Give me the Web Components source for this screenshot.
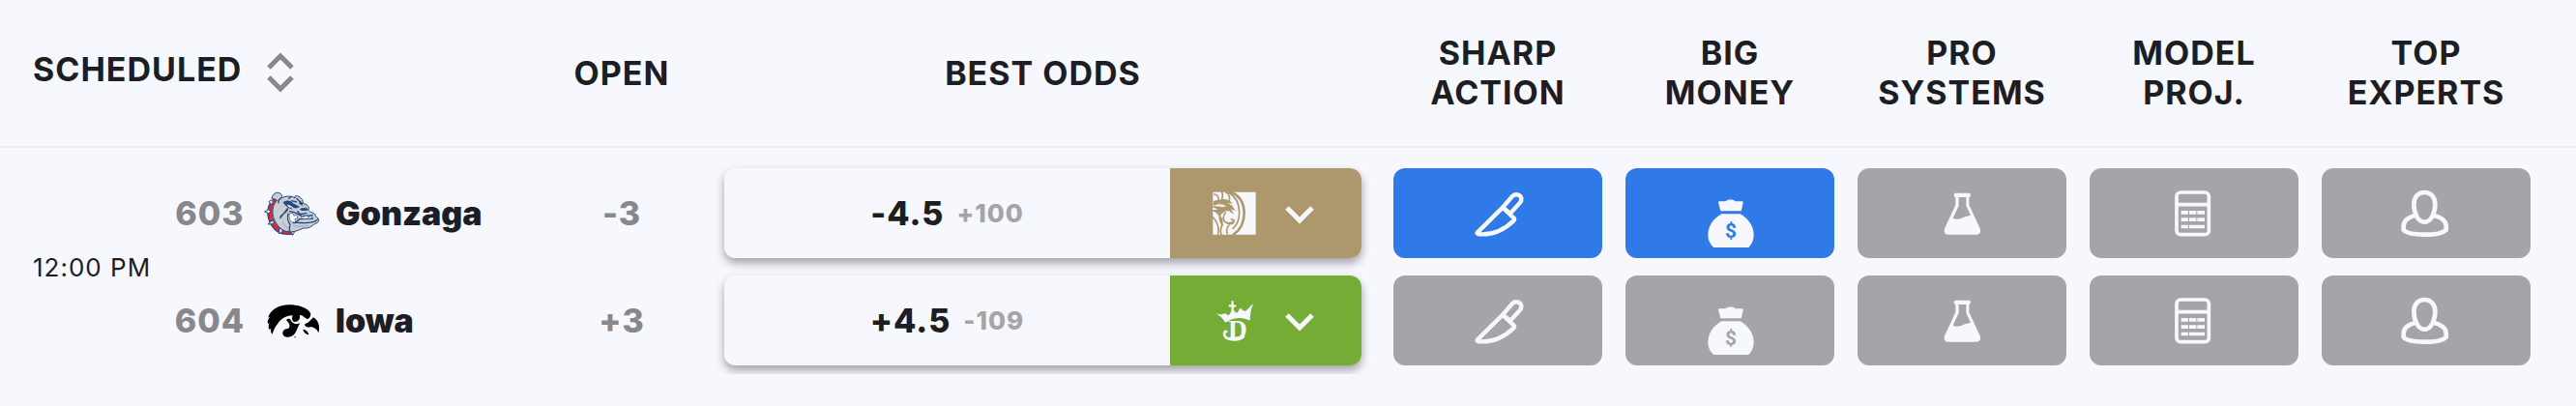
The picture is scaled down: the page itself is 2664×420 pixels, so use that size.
<!DOCTYPE html>
<html lang="en">
<head>
<meta charset="utf-8">
<meta name="viewport" content="width=device-width, initial-scale=1">
<title>Best odds</title>
<style>
    body {
        margin: 0;
        background: #f7f8fd;
        color: #1d1e23;
        font-family: Inter, "Liberation Sans", sans-serif;
        letter-spacing: 1px;
    }
</style>
</head>
<body>
<odds-board></odds-board>

<script>
    // white icons for the signal buttons, all on the same 240 unit box
    const signals = {
        sharp: `
            <g fill="none" stroke="currentColor" stroke-width="13" stroke-linejoin="round">
                <path d="M192 68C199 61 211 61 217 68C222 75 221 82 216 88L186 121L162 103Z"/>
                <path d="M162 103L84 180C81 184 84 186 89 186C132 189 170 169 196 144C199 141 199 138 196 135Z"/>
            </g>`,
        money: `
            <path fill="currentColor" d="M111 87C111 85 113 84 116 84H134C139 77 159 77 164 84H184C187 84 189 86 188 89L182 114H118Z"/>
            <path fill="currentColor" d="M121 123H179C205 137 221 162 221 189C221 204 215 217 205 227H97C85 218 79 204 79 189C79 162 94 137 121 123Z"/>
            <text class="cut" x="150" y="197" text-anchor="middle" font-family="Roboto, sans-serif" font-size="62" font-weight="700">$</text>`,
        systems: `
            <path fill="currentColor" fill-rule="evenodd" d="M127 58H169C175 58 176 70 169 71V95L202 166C208 179 201 187 191 187H105C95 187 88 179 94 166L127 95V71C120 70 121 58 127 58ZM137 71V97L119 136C130 141 141 139 151 134C159 130 167 129 174 127L160 97V71Z"/>`,
        model: `
            <g fill="none" stroke="currentColor" stroke-width="11">
                <rect x="93" y="56" width="100" height="131" rx="12"/>
                <path d="M93 94H193"/>
            </g>
            <path fill="currentColor" d="M107 113h22v11h-22zM132 113h22v11h-22zM157 113h23v11h-23zM107 135h22v11h-22zM132 135h22v11h-22zM157 135h23v11h-23zM107 157h22v11h-22zM132 157h48v11h-48z"/>`,
        experts: `
            <g fill="none" stroke="currentColor" stroke-width="14" stroke-linejoin="round">
                <path d="M142 56C163 56 175 72 175 93C175 119 163 148 142 148C121 148 109 119 109 93C109 72 121 56 142 56Z"/>
                <path d="M114 127C91 132 77 146 77 160V172C92 192 192 192 209 172V160C209 146 194 132 170 127"/>
            </g>`
    };

    const books = {
        mgm: {
            label: 'BetMGM',
            box: '156 85 135 135',
            art: `
                <path fill="currentColor" d="M157 87H290V219H157Z"/>
                <g fill="none" stroke="var(--book)" stroke-linecap="round">
                    <path stroke-width="8" d="M208 86C239 96 253 121 254 151C254 179 243 204 221 219"/>
                    <path stroke-width="5" d="M205 88C228 101 239 125 239 151C239 173 231 190 219 200"/>
                    <path stroke-width="5" d="M161 94C170 94 176 101 174 113M185 87C188 95 188 102 184 110M197 88C207 92 210 100 208 113"/>
                    <path stroke-width="5" d="M158 166C168 177 178 193 173 218M167 148C182 160 190 179 183 197C180 205 181 214 184 219M181 150C174 170 181 180 187 190M202 216C198 206 201 196 207 190"/>
                    <path stroke-width="5" d="M196 151C186 163 188 176 197 181C207 188 219 187 222 181M204 183C212 184 219 182 223 176M214 171L222 174"/>
                </g>
                <path fill="var(--book)" d="M158 115C171 110 180 113 188 109C201 108 211 115 219 123L203 121L217 129L227 146L214 140L222 157L207 146C195 142 190 151 181 157C172 148 164 147 158 148V142L172 142C165 137 162 136 158 136V131C174 130 184 134 196 134C183 127 171 125 158 129Z"/>
                <path fill="currentColor" d="M168 126C181 123 193 126 201 132C190 130 179 127 168 126Z"/>`
        },
        dk: {
            label: 'DraftKings',
            box: '156 418 135 135',
            art: `
                <path fill="currentColor" d="M165 462C174 467 182 468 187 466C193 461 200 464 202 469C207 470 213 464 214 455L215 445L207 443L206 437L214 437L215 423L221 426L221 437L229 438V443L221 445C221 455 225 460 232 462C237 457 237 450 244 447C248 453 252 457 258 456C266 451 271 441 284 432C276 443 273 464 272 486C250 474 220 474 196 492C190 481 181 473 165 462Z"/>
                <text x="204" y="540" font-family="Liberation Serif, serif" font-size="82" font-weight="700" fill="currentColor">D</text>
                <path fill="none" stroke="currentColor" stroke-width="8" stroke-linecap="round" d="M199 520C188 518 190 540 208 543C226 547 242 545 252 535"/>`
        }
    };

    const logos = {
        gonzaga: {
            box: '30 32 180 180',
            art: `
                <path fill="none" stroke="#26477f" stroke-width="16" d="M76 79C50 90 47 130 66 157C78 177 97 183 123 179"/>
                <path fill="none" stroke="#da2b3a" stroke-width="11" d="M74 80C53 91 49 130 67 156C79 175 97 181 121 178"/>
                <g fill="#dfe6ef" stroke="#26477f" stroke-width="3">
                    <path d="M58 80L51 85L58 93L66 87ZM49 109L38 116L50 121L58 115ZM60 144L48 155L62 154L70 147ZM84 168L82 184L93 179L94 170ZM118 174L125 189L131 178L126 172Z"/>
                </g>
                <path fill="#c7ced5" stroke="#26477f" stroke-width="3" stroke-linejoin="round" d="M60 75C62 65 69 56 80 57C89 58 94 65 91 73C105 67 121 66 133 74C129 67 135 64 144 69C153 73 158 82 157 91C165 91 173 95 176 105C171 111 178 118 190 120C198 126 194 133 204 136C209 143 205 151 195 153C184 161 174 169 158 167C145 173 127 181 111 178C89 177 71 153 65 132C59 109 66 91 77 81C71 77 66 75 60 75Z"/>
                <path fill="#26477f" d="M95 87C106 78 120 81 126 90L147 100C139 107 129 106 124 100L113 94L125 109C113 108 103 99 95 87ZM145 83C154 83 158 91 155 98L145 91ZM146 108C155 103 165 103 174 107L170 112L153 113Z"/>
                <path fill="#fff" d="M107 93L116 97L121 105L112 101Z"/>
                <path fill="none" stroke="#26477f" stroke-width="4" d="M91 73C83 76 80 83 81 90M110 105C103 114 96 124 85 137M87 131C96 121 105 119 111 107M112 121C106 132 111 148 118 158M118 158C113 163 116 171 115 177M126 151C143 148 163 154 188 148C195 147 199 143 204 139M132 151L146 139L189 137M114 115C128 115 142 123 153 130L188 127M139 114L149 124L169 120M122 68L112 76M137 75L148 85M120 82L138 86"/>
                <path fill="#fff" stroke="#26477f" stroke-width="2" d="M114 123L124 119L129 129L137 125L141 136L132 139L134 149L123 149L115 139ZM152 129L160 132L166 128L174 133L184 128L184 137L154 138Z"/>
                <path fill="none" stroke="#8296b4" stroke-width="2" d="M93 148C98 158 104 164 111 166M127 160C144 165 160 160 174 158M161 97C165 99 166 103 164 106"/>`
        },
        iowa: {
            box: '30 5 180 180',
            art: `
                <path d="M62 136C57 132 56 124 58 118L52 122C49 114 50 107 53 102L48 104C46 96 49 89 54 83L49 84C57 59 83 46 112 45C142 45 167 53 178 67C184 75 180 84 172 89C160 86 157 75 147 77C149 89 143 98 131 98C124 97 121 88 125 78C107 77 88 88 78 105C71 112 66 123 62 136Z"/>
                <path d="M105 92C111 87 117 87 120 95C128 106 140 106 148 102C140 113 139 124 132 134C123 146 103 149 96 139C90 129 99 118 111 119C118 113 116 104 110 98Z"/>
                <path d="M189 84C204 92 211 111 205 132C200 119 187 111 175 115C165 115 160 108 164 104C174 102 180 94 189 84ZM157 121C166 122 174 129 175 138C166 136 158 130 157 121Z"/>
                <circle cx="132" cy="145" r="2"/>`
        }
    };

    class SortButton extends HTMLElement {
        constructor() {
            super();
            this.attachShadow({mode: 'open'});
            this.shadowRoot.innerHTML = `
                <style>
                    :host { display: block; }
                    button {
                        display: flex;
                        align-items: flex-start;
                        gap: 26px;
                        padding: 0;
                        border: 0;
                        background: none;
                        color: inherit;
                        font: inherit;
                        letter-spacing: inherit;
                        cursor: pointer;
                    }
                    svg { width: 28px; height: 48px; }
                </style>
                <button type="button">
                    <slot></slot>
                    <svg viewBox="0 0 28 48" fill="none" stroke="#87878c" stroke-width="5" aria-hidden="true">
                        <path d="M2 19L14 7L26 19M2 29L14 41L26 29"/>
                    </svg>
                </button>`;
        }
    }
    customElements.define('sort-button', SortButton);

    class TeamName extends HTMLElement {
        connectedCallback() {
            const logo = logos[this.getAttribute('logo')];
            this.attachShadow({mode: 'open'});
            this.shadowRoot.innerHTML = `
                <style>
                    :host {
                        display: flex;
                        align-items: center;
                        gap: 16px;
                        font-size: 34px;
                        font-weight: 800;
                    }
                    .number { min-width: 76px; color: #87878c; }
                    .name { font-weight: 900; letter-spacing: normal; }
                    svg { flex: none; width: 60px; height: 60px; }
                </style>
                <span class="number">${this.getAttribute('number')}</span>
                <svg viewBox="${logo.box}" aria-hidden="true">${logo.art}</svg>
                <span class="name"><slot></slot></span>`;
        }
    }
    customElements.define('team-name', TeamName);

    class BestOdds extends HTMLElement {
        connectedCallback() {
            const book = books[this.getAttribute('book')];
            this.attachShadow({mode: 'open'});
            this.shadowRoot.innerHTML = `
                <style>
                    :host {
                        display: grid;
                        grid-template-columns: 1fr 198px;
                        height: 93px;
                        border-radius: 12px;
                        box-shadow: 0 5px 10px rgba(29, 30, 35, .4);
                    }
                    :host([book="mgm"]) { --book: #ac986c; }
                    :host([book="dk"]) { --book: #74ac36; }
                    .line {
                        display: flex;
                        align-items: center;
                        justify-content: center;
                        gap: 13px;
                        border-radius: 12px 0 0 12px;
                        background: #f7f8fd;
                        font-size: 34px;
                        font-weight: 800;
                    }
                    .price { color: #a5a4a9; font-size: 26px; }
                    button {
                        display: flex;
                        align-items: center;
                        justify-content: center;
                        gap: 28px;
                        padding: 0 4px 0 0;
                        border: 0;
                        border-radius: 0 12px 12px 0;
                        background: var(--book);
                        color: #f7f8fd;
                        cursor: pointer;
                    }
                    .logo { width: 45px; height: 45px; overflow: visible; }
                    .arrow { width: 34px; height: 34px; }
                </style>
                <div class="line">
                    <slot></slot>
                    <span class="price">${this.getAttribute('price')}</span>
                </div>
                <button type="button" aria-label="${book.label}" aria-haspopup="listbox">
                    <svg class="logo" viewBox="${book.box}" aria-hidden="true">${book.art}</svg>
                    <svg class="arrow" viewBox="0 0 34 34" fill="none" stroke="currentColor" stroke-width="5" aria-hidden="true">
                        <path d="M4 11L17 24L30 11"/>
                    </svg>
                </button>`;
        }
    }
    customElements.define('best-odds', BestOdds);

    class SignalButton extends HTMLElement {
        connectedCallback() {
            const type = this.getAttribute('type');
            this.attachShadow({mode: 'open'});
            this.shadowRoot.innerHTML = `
                <style>
                    :host { display: block; --fill: #a5a4a9; }
                    :host([active]) { --fill: #307ae8; }
                    button {
                        display: flex;
                        align-items: center;
                        justify-content: center;
                        width: 100%;
                        height: 93px;
                        padding: 0;
                        border: 0;
                        border-radius: 12px;
                        background: var(--fill);
                        color: #f7f8fd;
                        font-family: inherit;
                        cursor: pointer;
                    }
                    svg { width: 80px; height: 80px; }
                    .cut { fill: var(--fill); }
                </style>
                <button type="button" aria-label="${type}" aria-pressed="${this.hasAttribute('active')}">
                    <svg viewBox="27 2 240 240" aria-hidden="true">${signals[type]}</svg>
                </button>`;
        }
    }
    customElements.define('signal-button', SignalButton);

    const boardtpl = document.createElement('template');
    boardtpl.innerHTML = `
        <style>
            :host { display: block; }
            table {
                width: 100%;
                border-collapse: collapse;
                table-layout: fixed;
            }
            .time { width: 170px; }
            .team { width: 388px; }
            .open { width: 170px; }
            .signal { width: 240px; }
            .end { width: 35px; }
            th {
                height: 150px;
                padding: 0 12px 1px;
                border-bottom: 2px solid #ecedf2;
                font-size: 34px;
                font-weight: 700;
                line-height: 41px;
            }
            td { padding: 9px 12px; text-align: center; }
            tbody tr:first-child td { padding-top: 21px; }
            th:first-child, tbody .start { padding-left: 34px; padding-right: 0; text-align: left; }
            tbody .start { font-size: 26px; white-space: nowrap; }
            .number { color: #87878c; font-size: 34px; font-weight: 800; }
            td.name { padding-left: 9px; }
            td.odds { padding-left: 21px; padding-right: 21px; }
        </style>
        <table>
            <colgroup>
                <col class="time"><col class="team"><col class="open"><col>
                <col class="signal" span="5"><col class="end">
            </colgroup>
            <thead>
                <tr>
                    <th colspan="2" scope="col"><sort-button>SCHEDULED</sort-button></th>
                    <th scope="col">OPEN</th>
                    <th scope="col">BEST ODDS</th>
                    <th scope="col">SHARP<br>ACTION</th>
                    <th scope="col">BIG<br>MONEY</th>
                    <th scope="col">PRO<br>SYSTEMS</th>
                    <th scope="col">MODEL<br>PROJ.</th>
                    <th scope="col">TOP<br>EXPERTS</th>
                    <th></th>
                </tr>
            </thead>
            <tbody>
                <tr>
                    <td class="start" rowspan="2">12:00 PM</td>
                    <td class="name"><team-name number="603" logo="gonzaga">Gonzaga</team-name></td>
                    <td class="number">-3</td>
                    <td class="odds"><best-odds book="mgm" price="+100">-4.5</best-odds></td>
                    <td><signal-button type="sharp" active></signal-button></td>
                    <td><signal-button type="money" active></signal-button></td>
                    <td><signal-button type="systems"></signal-button></td>
                    <td><signal-button type="model"></signal-button></td>
                    <td><signal-button type="experts"></signal-button></td>
                    <td></td>
                </tr>
                <tr>
                    <td class="name"><team-name number="604" logo="iowa">Iowa</team-name></td>
                    <td class="number">+3</td>
                    <td class="odds"><best-odds book="dk" price="-109">+4.5</best-odds></td>
                    <td><signal-button type="sharp"></signal-button></td>
                    <td><signal-button type="money"></signal-button></td>
                    <td><signal-button type="systems"></signal-button></td>
                    <td><signal-button type="model"></signal-button></td>
                    <td><signal-button type="experts"></signal-button></td>
                    <td></td>
                </tr>
            </tbody>
        </table>`;

    class OddsBoard extends HTMLElement {
        constructor() {
            super();
            this.attachShadow({mode: 'open'});
            this.shadowRoot.appendChild(boardtpl.content.cloneNode(true));
        }
    }
    customElements.define('odds-board', OddsBoard);
</script>
</body>
</html>
